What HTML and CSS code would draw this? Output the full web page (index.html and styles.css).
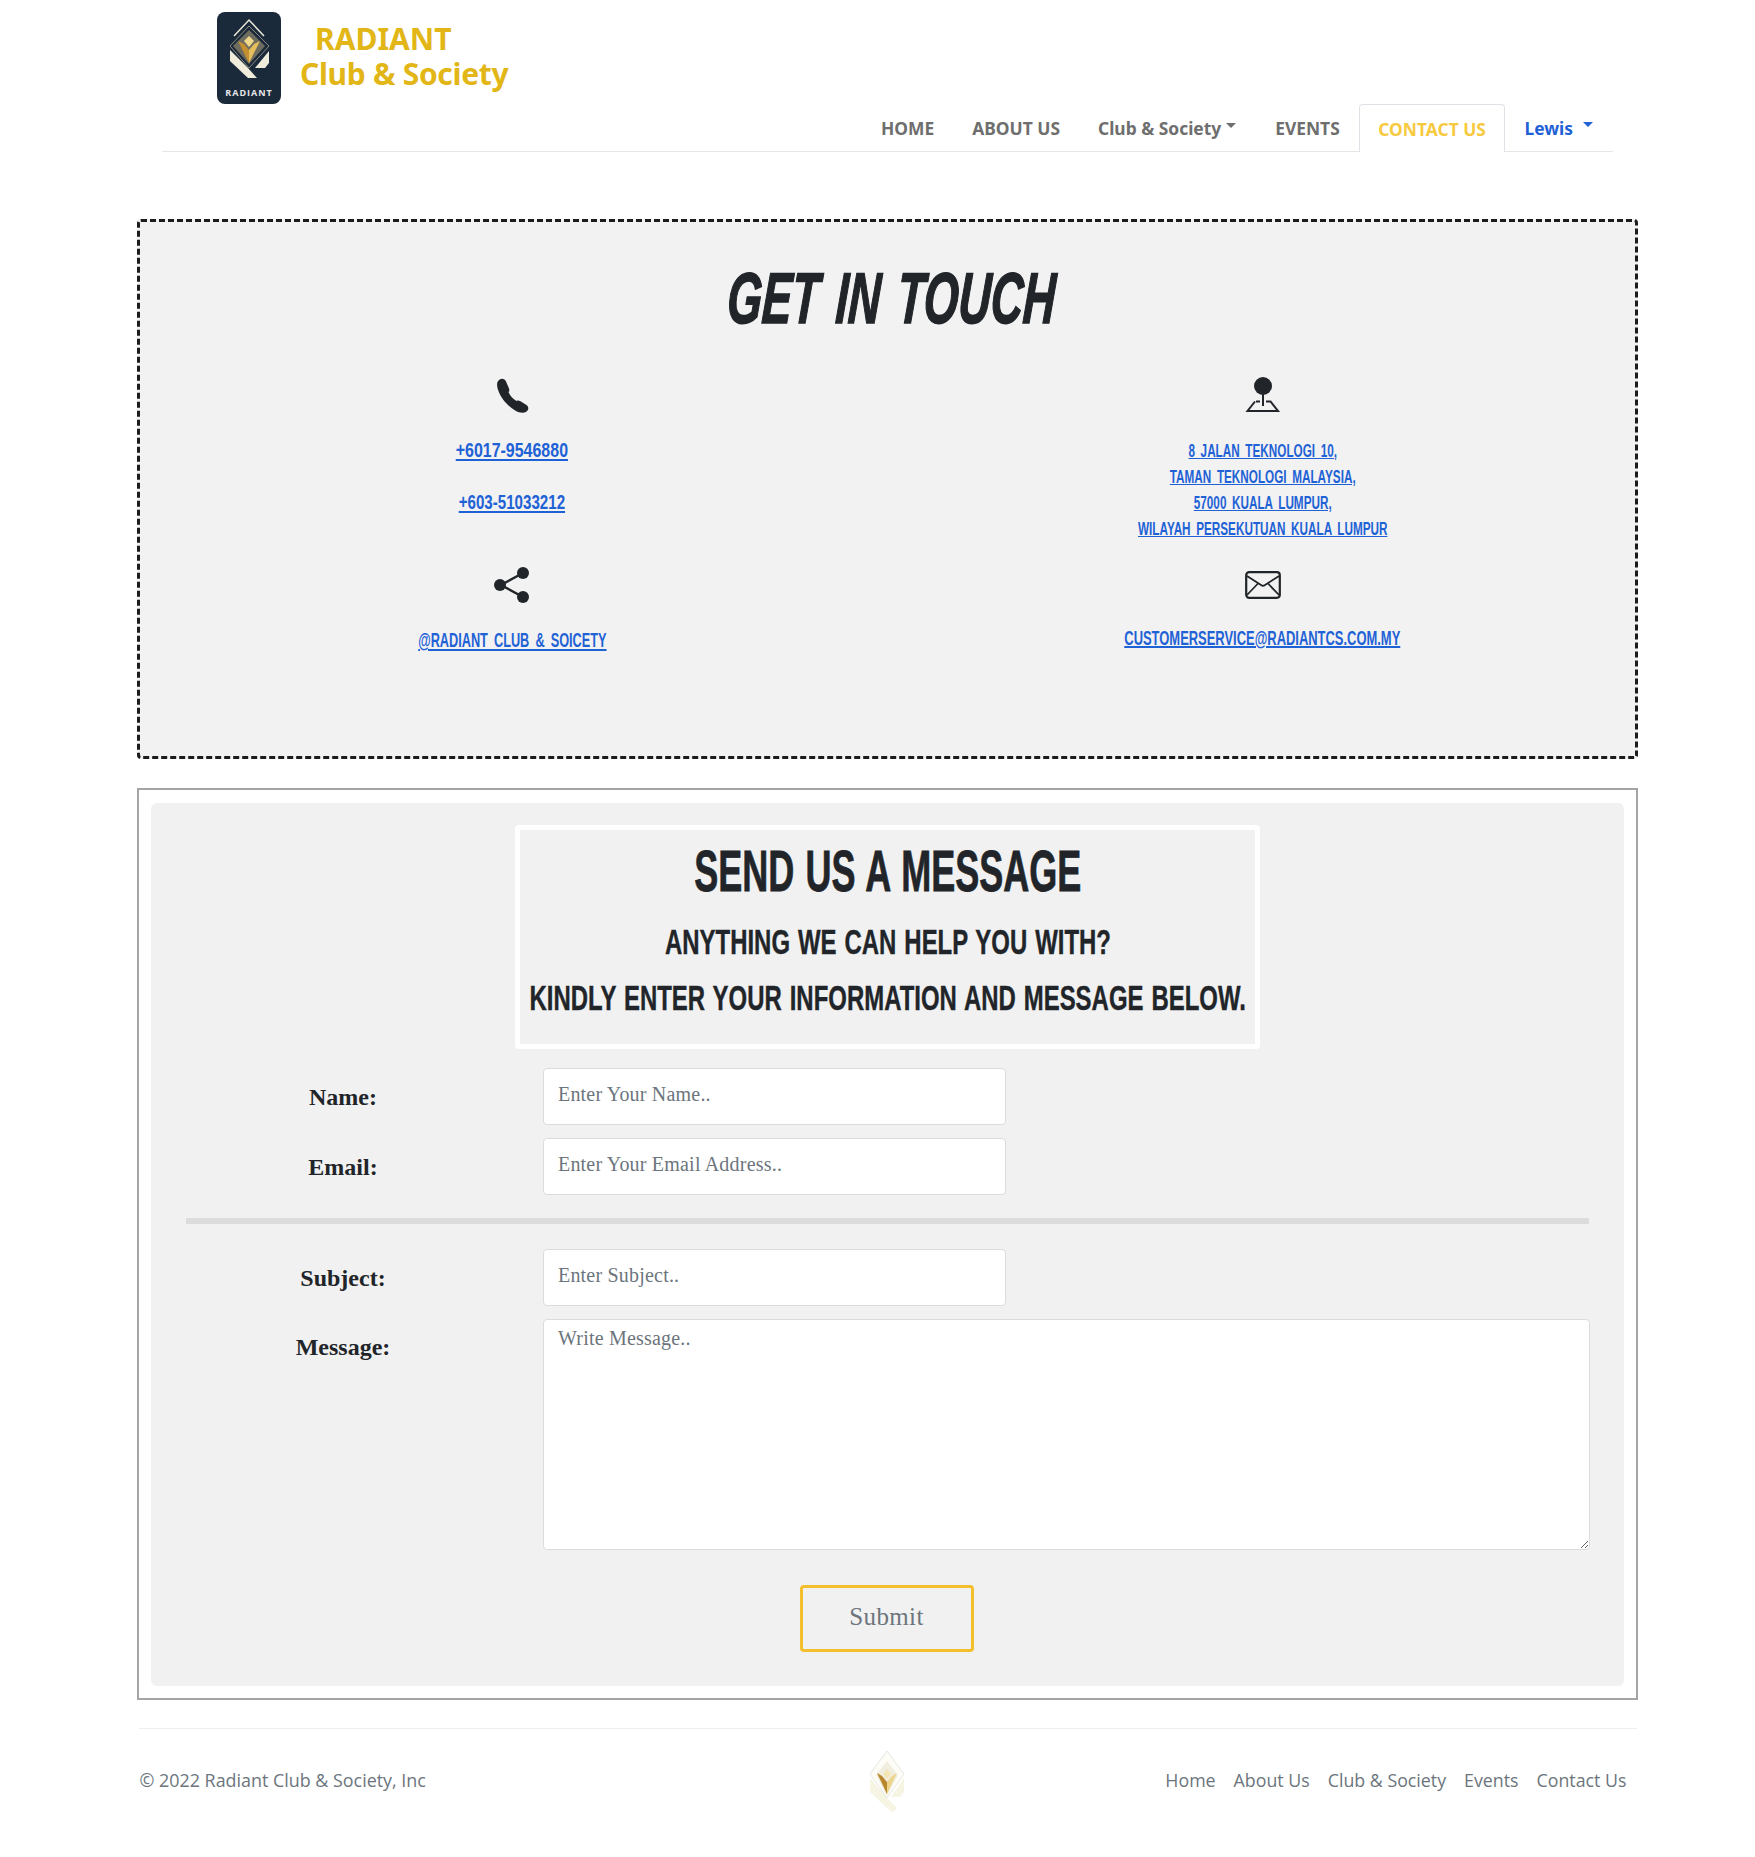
FILE: index.html
```html
<!DOCTYPE html>
<html lang="en">
<head>
<meta charset="utf-8">
<title>Contact Us - Radiant Club &amp; Society</title>
<link rel="stylesheet" href="styles.css">
</head>
<body>
<div class="page">
  <header class="site-header">
    <div class="brand">
      <div class="badge">
        <svg class="badge-mark" viewBox="0 0 64 68" aria-hidden="true">
          <path d="M17 24 32 8 47 24" fill="none" stroke="#e9e6d8" stroke-width="1.500"/>
          <circle cx="32" cy="17" r="1.800" fill="#e9e6d8"/>
          <path d="M13 38V49L31 66H40L31 56Z" fill="#efecdc"/>
          <path d="M52 39V51L48 56H38Z" fill="#efecdc"/>
          <path d="M32 14 52 34 32 56 13 34Z" fill="#1b2a3a" stroke="#8d8b7f" stroke-width="1"/>
          <path d="M32 18 48 34 32 52 16 34Z" fill="#6f6c60"/>
          <path d="M21 29 32 51V38L27 32Z" fill="#c4902f"/>
          <path d="M43 29 32 51V38L37 32Z" fill="#e6bf5c"/>
          <path d="M32 24 37 29 32 35 27 29Z" fill="#f0d78a"/>
        </svg>
        <span class="badge-name">RADIANT</span>
      </div>
      <div class="brand-name">
        <span class="brand-top">RADIANT</span>
        <span class="brand-bottom">Club &amp; Society</span>
      </div>
    </div>
    <nav class="tabs">
      <a class="tab">HOME</a>
      <a class="tab">ABOUT US</a>
      <a class="tab caret-tab">Club &amp; Society<i class="caret"></i></a>
      <a class="tab">EVENTS</a>
      <a class="tab tab-active">CONTACT US</a>
      <a class="tab tab-user">Lewis<i class="caret caret-user"></i></a>
    </nav>
  </header>

  <main class="content">
    <section class="touch">
      <h1 class="touch-title"><span class="touch-title-text">GET IN TOUCH</span></h1>
      <div class="touch-grid">
        <div class="touch-cell cell-phone">
          <svg class="icon" viewBox="0 0 36 36" aria-hidden="true"><path fill="#212529" d="M3.500 5C6 .5 10.500 1 12 4.500L15 11.500C15.800 13.800 15 14.500 14.500 15C16 19 19 22 22.500 24C23.500 23.500 24.500 23.300 26.500 24.300L32.500 28C35 30 35 33 32 35C26 37.500 19 33 13 27C7 21 1.500 11 3.500 5Z"/></svg>
          <a class="link link-phone">+6017-9546880</a>
          <a class="link link-phone second">+603-51033212</a>
        </div>
        <div class="touch-cell cell-address">
          <svg class="icon" viewBox="0 0 36 36" aria-hidden="true">
            <circle cx="18" cy="9" r="9" fill="#212529"/>
            <path d="M18 16V29" stroke="#212529" stroke-width="2" fill="none"/>
            <path d="M11 24.500H15M21 24.500H25.500L33 34H2.500L10 24.500" stroke="#212529" stroke-width="2" fill="none"/>
          </svg>
          <a class="link link-address">8 JALAN TEKNOLOGI 10,<br>TAMAN TEKNOLOGI MALAYSIA,<br>57000 KUALA LUMPUR,<br>WILAYAH PERSEKUTUAN KUALA LUMPUR</a>
        </div>
        <div class="touch-cell cell-social">
          <svg class="icon" viewBox="0 0 36 36" aria-hidden="true">
            <path d="M29 6 7 18 29 30" stroke="#212529" stroke-width="2.500" fill="none"/>
            <circle cx="29" cy="6" r="6" fill="#212529"/>
            <circle cx="6" cy="18" r="6" fill="#212529"/>
            <circle cx="29" cy="30" r="6" fill="#212529"/>
          </svg>
          <a class="link link-social">@RADIANT CLUB &amp; SOICETY</a>
        </div>
        <div class="touch-cell cell-mail">
          <svg class="icon icon-mail" viewBox="0 0 36 28" aria-hidden="true">
            <rect x="1.200" y="1.200" width="33.600" height="25.600" rx="3" fill="none" stroke="#212529" stroke-width="2.200"/>
            <path d="M2 5 16 14Q18 15.500 20 14L34 5M2 24 13 12.500M34 24 23 12.500" fill="none" stroke="#212529" stroke-width="1.800"/>
          </svg>
          <a class="link link-mail">CUSTOMERSERVICE@RADIANTCS.COM.MY</a>
        </div>
      </div>
    </section>

    <section class="message-frame">
      <div class="message-panel">
        <div class="message-heading">
          <h2 class="message-title">SEND US A MESSAGE</h2>
          <p class="message-sub">ANYTHING WE CAN HELP YOU WITH?</p>
          <p class="message-sub">KINDLY ENTER YOUR INFORMATION AND MESSAGE BELOW.</p>
        </div>
        <form class="form">
          <div class="form-row">
            <label class="form-label" for="f-name">Name:</label>
            <input class="field" id="f-name" type="text" placeholder="Enter Your Name..">
          </div>
          <div class="form-row">
            <label class="form-label" for="f-email">Email:</label>
            <input class="field" id="f-email" type="text" placeholder="Enter Your Email Address..">
          </div>
          <hr class="form-rule">
          <div class="form-row">
            <label class="form-label" for="f-subject">Subject:</label>
            <input class="field" id="f-subject" type="text" placeholder="Enter Subject..">
          </div>
          <div class="form-row">
            <label class="form-label label-top" for="f-message">Message:</label>
            <textarea class="field field-area" id="f-message" placeholder="Write Message.."></textarea>
          </div>
          <div class="form-actions">
            <button class="submit" type="button">Submit</button>
          </div>
        </form>
      </div>
    </section>
  </main>

  <footer class="site-footer">
    <span class="copyright">© 2022 Radiant Club &amp; Society, Inc</span>
    <svg class="footer-mark" viewBox="0 0 40 62" aria-hidden="true">
      <path d="M3 28V42L20 58 26 62 30 58 20 48Z" fill="#f6f4e2"/>
      <path d="M37 28V42L33 47H24Z" fill="#f6f4e2"/>
      <path d="M20 1 37 24 20 48 3 24Z" fill="#fdfcf6" stroke="#e6e8e2" stroke-width="1"/>
      <path d="M20 11 31 25 20 46 9 25Z" fill="#f1eee0"/>
      <path d="M10 23 20 44V32L15 26Z" fill="#b9872e"/>
      <path d="M30 23 20 44V32L25 26Z" fill="#ecd58a"/>
      <path d="M20 19 24 24 20 29 16 24Z" fill="#f4e5b4"/>
    </svg>
    <nav class="footer-nav">
      <a class="footer-link">Home</a>
      <a class="footer-link">About Us</a>
      <a class="footer-link">Club &amp; Society</a>
      <a class="footer-link">Events</a>
      <a class="footer-link">Contact Us</a>
    </nav>
  </footer>
</div>
</body>
</html>
```
FILE: styles.css
```css
* { box-sizing: border-box; }
html, body { margin: 0; padding: 0; background: #fff; }
body { font-family: "Open Sans", sans-serif; color: #212529; height: 1857px; overflow: hidden; }
.page { padding-left: 20px; }

.site-header { width: 1451px; margin: 0 auto; border-bottom: 1px solid #e4e6e8; }
.brand { display: flex; align-items: flex-start; padding: 12px 0 0 55px; height: 104px; }
.badge { width: 64px; height: 92px; border-radius: 8px; background: #1b2a3a; display: flex; flex-direction: column; align-items: center; }
.badge-mark { width: 64px; height: 68px; flex: none; }
.badge-name { font: 700 9px/12px "Open Sans", sans-serif; letter-spacing: 1px; color: #e6e6e6; margin-top: 7px; }
.brand-name { display: flex; flex-direction: column; margin-left: 19px; color: #e2b616; font-family: "Noto Sans", sans-serif; font-weight: 700; font-size: 30px; line-height: 35px; }
.brand-top { margin: 9px 0 0 15px; }
.brand-bottom { letter-spacing: -.3px; }

.tabs { display: flex; justify-content: flex-end; height: 47px; font: 700 17.400px/48px "Noto Sans", sans-serif; color: #6e6e6e; }
.tab { padding: 0 19px; position: relative; white-space: nowrap; }
.caret-tab { padding-right: 35px; }
.caret { position: absolute; top: 19px; right: 20px; width: 0; height: 0; border: 5px solid transparent; border-top-color: #6e6e6e; border-bottom: 0; }
.tab-active { color: #f7c93e; background: #fff; height: 48px; border: 1px solid #dee2e6; border-bottom: 0; border-radius: 4px 4px 0 0; padding: 0 18.500px; }
.tab-user { color: #1f62d6; padding-right: 40px; }
.caret-user { border-top-color: #1f62d6; top: 18px; }

.content { width: 1501px; margin: 67px auto 0; }
.touch { height: 540px; border: 3px dashed #1c1c1c; border-radius: 4px; background: #f2f2f2; padding-top: 39px; }
.touch-title { margin: 0; height: 74px; display: flex; justify-content: center; font: italic 700 72px/74px "Liberation Sans", sans-serif; word-spacing: .1em; color: #212529; padding-left: 9px; -webkit-text-stroke: 1.500px #212529; }
.touch-title-text { display: block; white-space: nowrap; transform: scaleX(.62) skewX(-5deg); }
.touch-grid { display: grid; grid-template-columns: 1fr 1fr; margin: 42px -3px 0; }
.touch-cell { display: flex; flex-direction: column; align-items: center; }
.cell-phone, .cell-address { height: 190px; }
.icon { width: 36px; height: 36px; display: block; flex: none; }
.icon-mail { height: 28px; }
.link { color: #1f62d6; text-decoration: underline; text-align: center; font-family: "Liberation Sans", sans-serif; font-weight: 700; white-space: nowrap; flex: none; word-spacing: .2em; }
.link-phone { font-size: 21px; line-height: 26px; margin-top: 24px; transform: scaleX(.76); }
.link-phone.second { margin-top: 26px; transform: scaleX(.72); }
.link-address { font-size: 18.500px; line-height: 26px; margin-top: 25px; transform: scaleX(.634); }
.cell-social { height: 90px; }
.cell-mail { height: 90px; padding-top: 4px; }
.link-social { font-size: 21px; line-height: 26px; margin-top: 24px; transform: scaleX(.606); }
.link-mail { font-size: 20px; line-height: 26px; margin-top: 26px; transform: scaleX(.647); }

.message-frame { margin-top: 29px; height: 912px; border: 2px solid #a5a5a5; padding: 13px 12px 12px; }
.message-panel { height: 883px; background: #f1f1f1; border-radius: 6px; padding: 22px 35px 0; }
.message-heading { width: 745px; height: 224px; margin: 0 auto; border: 5px solid #fff; border-radius: 4px; padding-top: 11px; display: flex; flex-direction: column; align-items: center; font-family: "Liberation Sans", sans-serif; font-weight: 700; color: #212529; word-spacing: .12em; }
.message-title { margin: 0; font-size: 58px; line-height: 60px; white-space: nowrap; flex: none; transform: scaleX(.621); -webkit-text-stroke: .8px #212529; }
.message-sub { margin: 14px 0 0; font-size: 35px; line-height: 42px; white-space: nowrap; flex: none; transform: scaleX(.684); -webkit-text-stroke: .4px #212529; }
.message-title + .message-sub { margin-top: 20px; }
.form { margin-top: 19px; }
.form-row { display: grid; grid-template-columns: 314px 1fr; column-gap: 43px; align-items: center; margin-bottom: 13px; }
.form-label { text-align: center; font: 700 24px/30px "Liberation Serif", serif; color: #212529; }
.label-top { align-self: start; padding-top: 13px; }
.field { width: 463px; height: 57px; background: #fff; border: 1px solid #dcdcdc; border-radius: 4px; padding: 0 14px 4px; font: 400 20px "Liberation Serif", serif; letter-spacing: .2px; color: #212529; outline: 0; }
.field::placeholder { color: #6c757d; opacity: 1; }
.field-area { display: block; width: 1047px; height: 231px; padding: 6px 14px; line-height: 24px; resize: vertical; }
.form-rule { height: 6px; margin: 23px 0 25px; border: 0; background: #dcdcdc; }
.form-actions { display: flex; justify-content: center; margin-top: 35px; padding-right: 2px; }
.submit { width: 174px; height: 67px; background: transparent; border: 3px solid #f3bf2d; border-radius: 4px; font: 400 25px "Liberation Serif", serif; color: #6c757d; letter-spacing: .4px; padding: 0 0 3px; }

.site-footer { width: 1498px; margin: 28px auto 0; border-top: 1px solid #eceeef; display: flex; align-items: flex-start; justify-content: space-between; height: 100px; padding: 20px 10px 0 1px; position: relative; }
.copyright { font: 400 17.900px/26px "Open Sans", sans-serif; color: #6c757d; margin-top: 18px; }
.footer-link { font: 400 17.800px/26px "Open Sans", sans-serif; color: #6c757d; }
.footer-mark { width: 40px; height: 62px; position: absolute; left: 728px; top: 21px; }
.footer-nav { display: flex; gap: 18px; margin-top: 18px; }
```
